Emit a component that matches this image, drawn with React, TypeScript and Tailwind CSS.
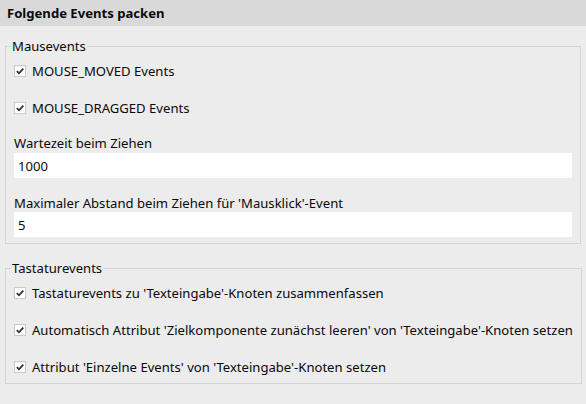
import React from "react";

function Check({ label }: { label: string }) {
  return (
    <div className="flex h-[24px] items-center">
      <span className="flex h-[12px] w-[12px] items-center justify-center border border-[#c9c9c9] bg-white">
        <svg width="10" height="10" viewBox="0 0 10 10">
          <path d="M1.8 5.2 L4 7.3 L8.3 2.6" fill="none" stroke="#333" strokeWidth="1.8" />
        </svg>
      </span>
      <span className="ml-[6px] whitespace-nowrap">{label}</span>
    </div>
  );
}

export default function App() {
  return (
    <div
      className="h-[404px] w-[586px] bg-[#ececec] text-[13.1px] leading-[18px] text-[#0a0a0a]"
      style={{ fontFamily: '"Noto Sans", "Liberation Sans", sans-serif' }}
    >
      <div className="flex h-[26px] items-center bg-[#d9d9d9] pl-[7px] font-bold">
        Folgende Events packen
      </div>
      <div className="px-[5px]">
        <fieldset className="mt-[11px] border border-[#d4d4d4] px-[8px] pb-[6px]">
          <legend className="-ml-[3px] px-[1px] leading-[18px]">Mausevents</legend>
          <div className="flex flex-col gap-[13px] pt-[4px]">
            <Check label="MOUSE_MOVED Events" />
            <Check label="MOUSE_DRAGGED Events" />
          </div>
          <div className="mt-[14px]">Wartezeit beim Ziehen</div>
          <div className="mt-[1px] flex h-[25px] items-center bg-white pl-[4px]">1000</div>
          <div className="mt-[16px]">Maximaler Abstand beim Ziehen für 'Mausklick'-Event</div>
          <div className="flex h-[25px] items-center bg-white pl-[4px]">5</div>
        </fieldset>
        <fieldset className="mt-[15px] border border-[#d4d4d4] px-[8px] pb-[4px]">
          <legend className="-ml-[3px] px-[1px] leading-[18px]">Tastaturevents</legend>
          <div className="flex flex-col gap-[13px] pt-[4px]">
            <Check label="Tastaturevents zu 'Texteingabe'-Knoten zusammenfassen" />
            <Check label="Automatisch Attribut 'Zielkomponente zunächst leeren' von 'Texteingabe'-Knoten setzen" />
            <Check label="Attribut 'Einzelne Events' von 'Texteingabe'-Knoten setzen" />
          </div>
        </fieldset>
      </div>
    </div>
  );
}
